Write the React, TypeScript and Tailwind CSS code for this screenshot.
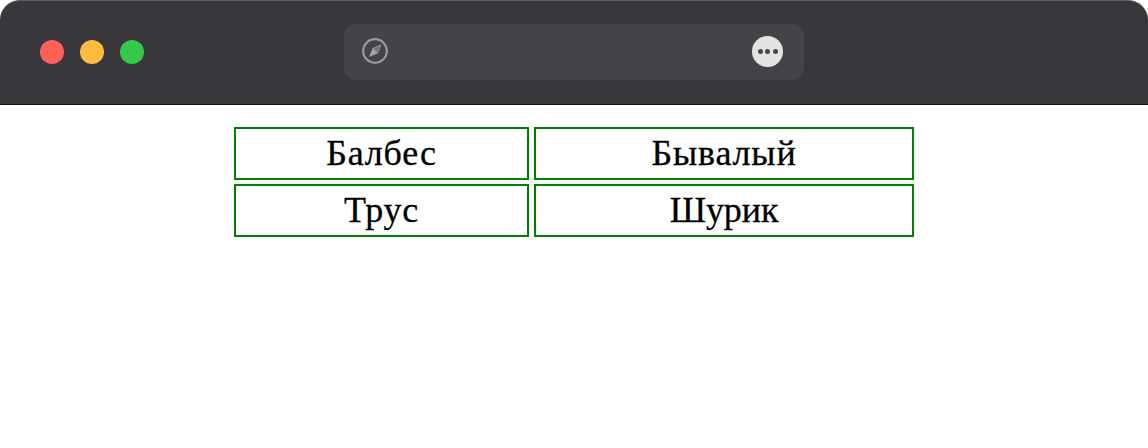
const cells = [
	{ name: "Балбес", tracking: "tracking-[0.85px]" },
	{ name: "Бывалый", tracking: "tracking-[0.85px]" },
	{ name: "Трус", tracking: "tracking-[0.7px]" },
	{ name: "Шурик", tracking: "tracking-[-0.1px]" },
];

function CompassIcon() {
	return (
		<svg width="28" height="28" viewBox="0 0 28 28" fill="none" className="mb-[2px]">
			<circle cx="14" cy="14" r="11.8" stroke="#9a999c" strokeWidth="2.2" />
			<path d="M20 8 L16.4 16.4 L11.6 11.6 Z" fill="#77767a" stroke="#a3a2a5" strokeWidth="0.8" />
			<path d="M8 20 L11.6 11.6 L16.4 16.4 Z" fill="#a3a2a5" />
		</svg>
	);
}

function MoreIcon() {
	return (
		<div className="flex h-[31px] w-[31px] items-center justify-center gap-[2.5px] rounded-full bg-[#e3e3e4]">
			<span className="h-[5px] w-[5px] rounded-full bg-[#48464b]" />
			<span className="h-[5px] w-[5px] rounded-full bg-[#48464b]" />
			<span className="h-[5px] w-[5px] rounded-full bg-[#48464b]" />
		</div>
	);
}

export default function App() {
	return (
		<div className="h-[448px] w-[1148px] overflow-hidden bg-white">
			<header className="flex h-[105px] items-center rounded-t-[20px] border-t border-b border-t-[#5c5b5f] border-b-[#111014] bg-[#39373b] pb-[2px] pl-10">
				<div className="flex gap-4">
					<span className="h-6 w-6 rounded-full bg-[#ff5f5b]" />
					<span className="h-6 w-6 rounded-full bg-[#ffbc3f]" />
					<span className="h-6 w-6 rounded-full bg-[#35c94b]" />
				</div>
				<div className="ml-[200px] flex h-14 w-[460px] items-center justify-between rounded-xl bg-[#454348] pl-[17px] pr-[21px]">
					<CompassIcon />
					<MoreIcon />
				</div>
			</header>
			<div className="mx-auto mt-[22px] grid w-[680px] grid-cols-[295px_380px] gap-x-[5px] gap-y-1">
				{cells.map((cell) => (
					<div
						key={cell.name}
						className={`flex h-[53px] items-center justify-center border-2 border-[#008000] pb-[2px] font-['Liberation_Serif',serif] text-[36px] leading-none text-black [-webkit-text-stroke:0.3px_black] ${cell.tracking}`}>
						{cell.name}
					</div>
				))}
			</div>
		</div>
	);
}
